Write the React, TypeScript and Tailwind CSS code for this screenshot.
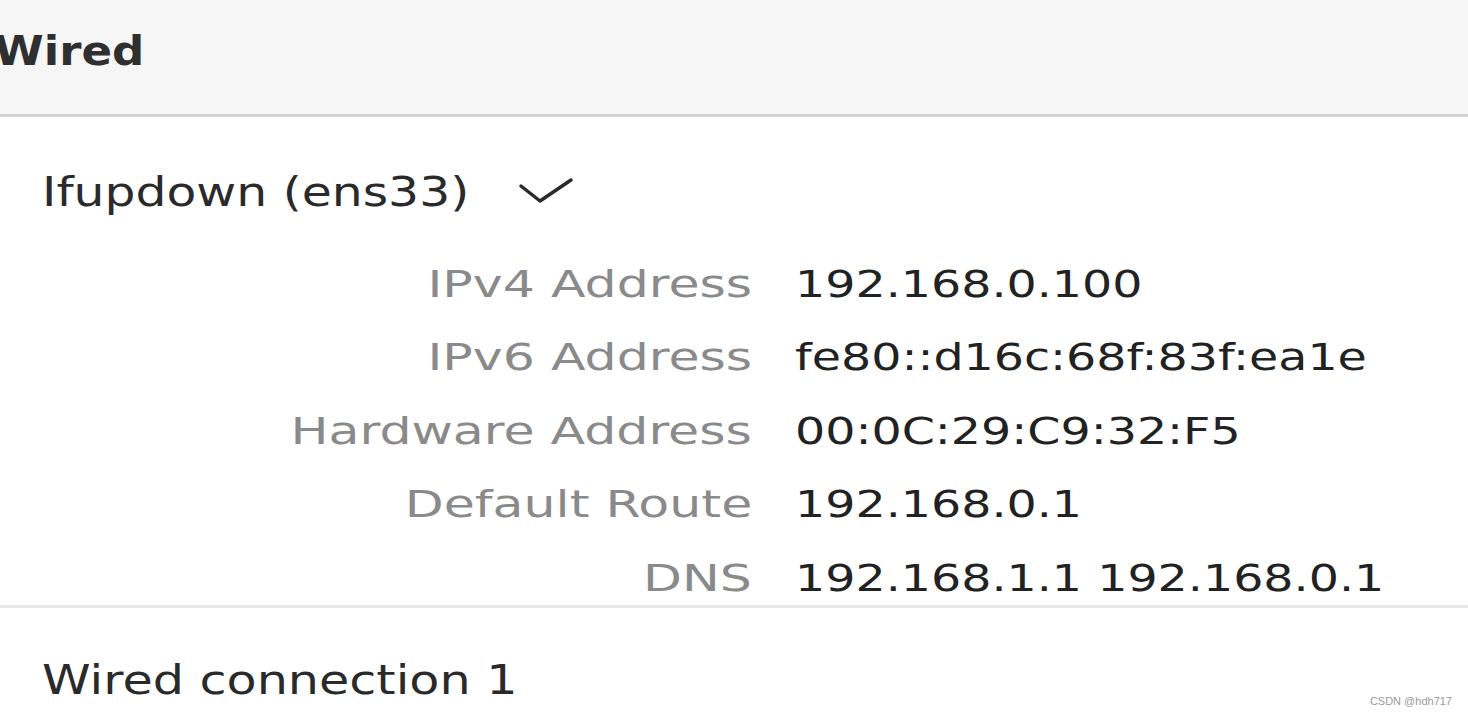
const rows = [
  { label: "IPv4 Address", value: "192.168.0.100" },
  { label: "IPv6 Address", value: "fe80::d16c:68f:83f:ea1e" },
  { label: "Hardware Address", value: "00:0C:29:C9:32:F5" },
  { label: "Default Route", value: "192.168.0.1" },
  { label: "DNS", value: "192.168.1.1 192.168.0.1" },
];

function Check() {
  return (
    <svg width="60" height="36" viewBox="0 0 60 36" fill="none" className="text-[#2a2a2a]">
      <path d="M5 14 L24 29 L55 8" stroke="currentColor" strokeWidth="3.5" strokeLinecap="round" strokeLinejoin="round" />
    </svg>
  );
}

export default function App() {
  return (
    <div
      className="relative h-[717px] w-full overflow-hidden bg-white"
      style={{ fontFamily: '"DejaVu Sans", "Noto Sans", sans-serif' }}
    >
      {/* section header */}
      <div className="flex h-[117px] items-center border-b-[3px] border-[#d4d4d4] bg-[#f6f6f6] pb-[12px]">
        <span className="-ml-[6px] inline-block origin-left scale-x-[1.1] text-[41px] leading-none font-bold text-[#2f2f2f]">
          Wired
        </span>
      </div>

      {/* active connection */}
      <div className="border-b-[3px] border-[#e8e8e8] pt-[39px]">
        <div className="flex h-[72px] items-center pl-[42px]">
          <span className="inline-block origin-left scale-x-[1.22] text-[40px] leading-none text-[#2a2a2a]">
            Ifupdown (ens33)
          </span>
          <div className="ml-[124px] mb-[4px]">
            <Check />
          </div>
        </div>

        <div className="mt-[29px] flex flex-col gap-[19.5px]">
          {rows.map((r) => (
            <div key={r.label} className="flex h-[54px] items-center">
              <div className="w-[752px] text-right">
                <span className="inline-block origin-right scale-x-[1.33] text-[38px] leading-none text-[#8a8a8a]">
                  {r.label}
                </span>
              </div>
              <div className="ml-[43px]">
                <span className="inline-block origin-left scale-x-[1.25] text-[38px] leading-none text-[#222222]">
                  {r.value}
                </span>
              </div>
            </div>
          ))}
        </div>
      </div>

      {/* other profile */}
      <div className="flex h-[144px] items-center pl-[42px]">
        <span className="inline-block origin-left scale-x-[1.23] text-[40px] leading-none text-[#2a2a2a]">
          Wired connection 1
        </span>
      </div>

      <div
        className="absolute right-[16px] bottom-[8px] text-[11px] text-[#9a9a9a]"
        style={{ fontFamily: '"Liberation Sans", Arial, sans-serif' }}
      >
        CSDN @hdh717
      </div>
    </div>
  );
}
